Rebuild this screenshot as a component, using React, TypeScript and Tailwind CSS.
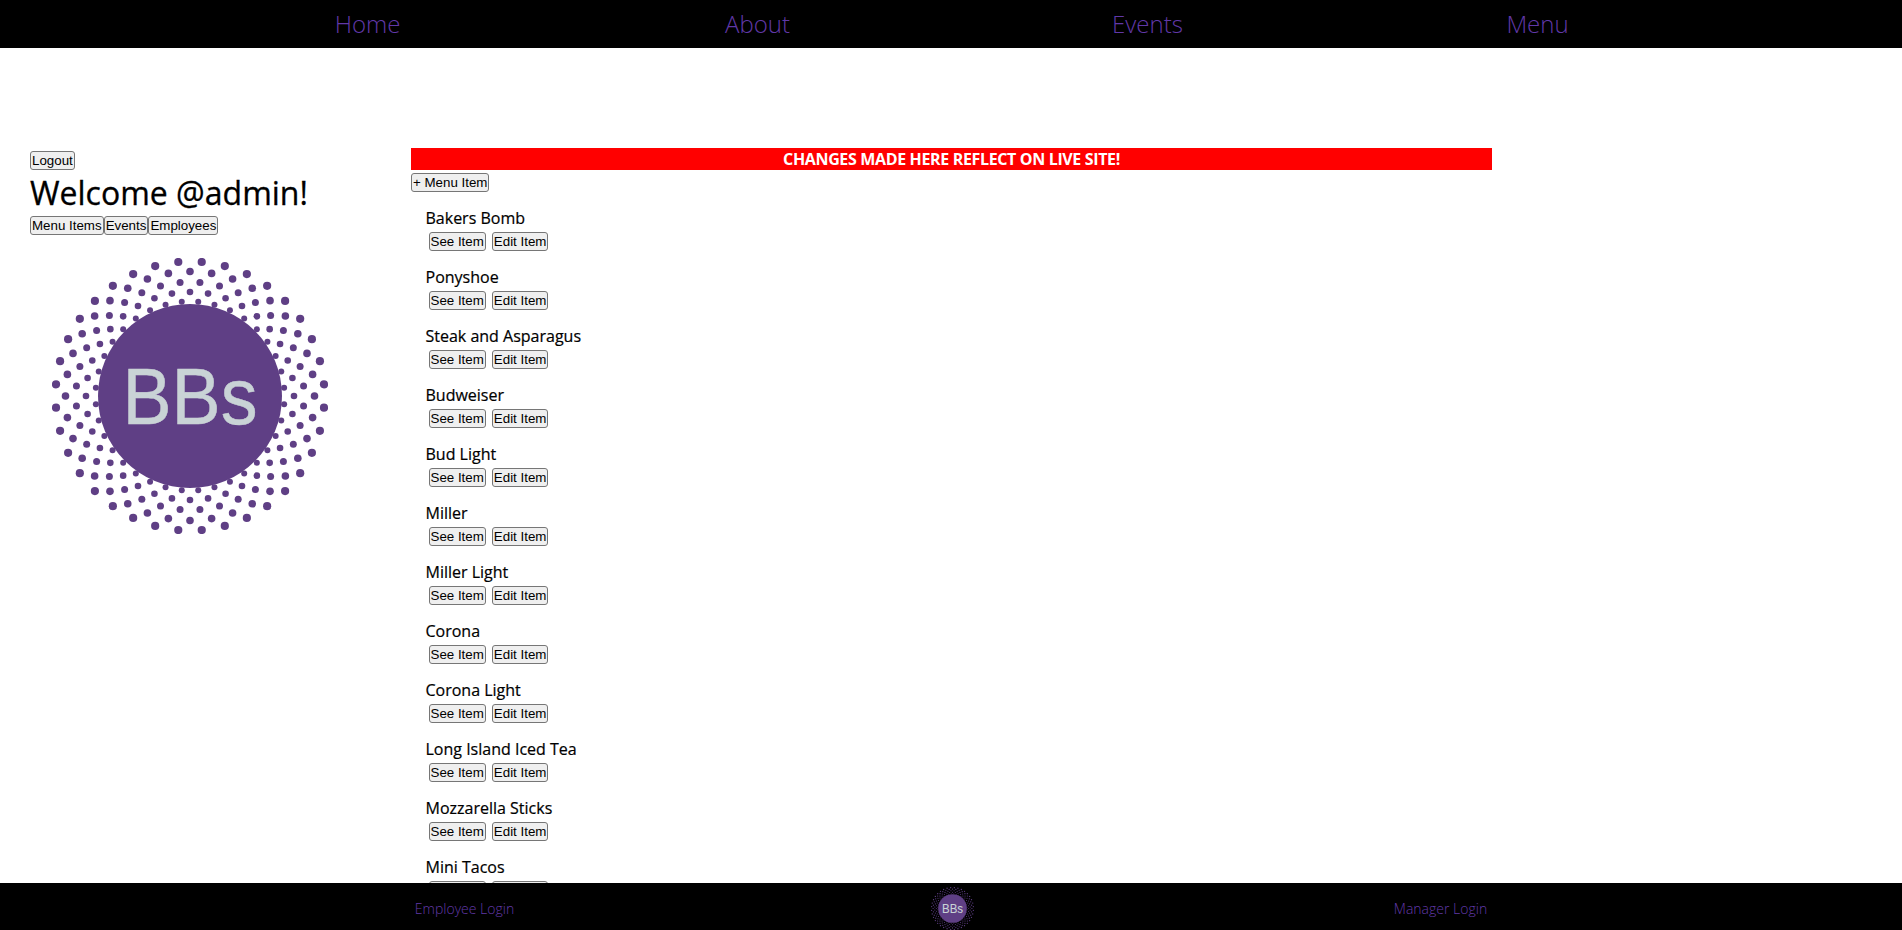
import React from 'react';

const navLinks = ['Home', 'About', 'Events', 'Menu'];

const menuItems = [
  'Bakers Bomb',
  'Ponyshoe',
  'Steak and Asparagus',
  'Budweiser',
  'Bud Light',
  'Miller',
  'Miller Light',
  'Corona',
  'Corona Light',
  'Long Island Iced Tea',
  'Mozzarella Sticks',
  'Mini Tacos',
];

// rings of the halftone logo: radius, dot radius, angle offset in degrees
const rings = [
  { r: 134.5, dot: 4.1, offset: 5 },
  { r: 124.5, dot: 3.8, offset: 0 },
  { r: 114, dot: 3.5, offset: 5 },
  { r: 104, dot: 3.3, offset: 0 },
  { r: 94.5, dot: 3, offset: 5 },
];

const Logo: React.FC<{ className?: string }> = ({ className }) => (
  <svg viewBox="-138 -138 276 276" className={className}>
    {rings.map((ring) =>
      Array.from({ length: 36 }, (_, i) => {
        const a = ((i * 10 + ring.offset) * Math.PI) / 180;
        return (
          <circle
            key={`${ring.r}-${i}`}
            cx={ring.r * Math.sin(a)}
            cy={-ring.r * Math.cos(a)}
            r={ring.dot}
            fill="#5f3f85"
          />
        );
      }),
    )}
    <circle cx="0" cy="0" r="92" fill="#5f3f85" />
    <text
      x="0"
      y="28"
      textAnchor="middle"
      textLength="135"
      lengthAdjust="spacingAndGlyphs"
      fontSize="80"
      fill="#c9d3d6"
      stroke="#c9d3d6"
      strokeWidth="0.5"
      strokeLinejoin="round"
      style={{ fontFamily: '"Liberation Sans", sans-serif' }}
    >
      BBs
    </text>
  </svg>
);

const Btn: React.FC<{ children: React.ReactNode }> = ({ children }) => (
  <button className="h-[19px] shrink-0 rounded-[3px] border border-[#767676] bg-[#efefef] px-[1px] font-['Liberation_Sans',sans-serif] text-[13.33px] leading-none text-black">
    {children}
  </button>
);

export default function App() {
  return (
    <div className="flex h-[930px] flex-col overflow-hidden bg-white font-['Open_Sans',sans-serif] text-black">
      <header className="flex h-[48px] shrink-0 justify-center bg-black">
        <nav className="ml-[3px] grid w-[1560px] grid-cols-4">
          {navLinks.map((link) => (
            <a key={link} className="flex items-center justify-center text-[24px] font-light text-[#6038a8]">
              {link}
            </a>
          ))}
        </nav>
      </header>

      <main className="flex min-h-0 flex-1 overflow-hidden pl-[30px] pt-[100px]">
        <aside className="flex w-[381px] shrink-0 flex-col items-start pt-[3px]">
          <Btn>Logout</Btn>
          <h1 className="text-[32px] font-normal leading-[46px] [-webkit-text-stroke:0.3px_black]">Welcome @admin!</h1>
          <div className="flex">
            <Btn>Menu Items</Btn>
            <Btn>Events</Btn>
            <Btn>Employees</Btn>
          </div>
          <Logo className="ml-[22px] mt-[23px] h-[276px] w-[276px]" />
        </aside>

        <section className="w-[1081px] shrink-0">
          <div className="h-[22px] bg-[#ff0000] text-center text-[16px] font-bold leading-[22px] tracking-[-0.35px] text-white">
            CHANGES MADE HERE REFLECT ON LIVE SITE!
          </div>
          <div className="mt-[3px] flex">
            <Btn>+ Menu Item</Btn>
          </div>
          <ul className="pl-[14.5px]">
            {menuItems.map((item) => (
              <li key={item} className="pt-[15px]">
                <p className="text-[16px] font-normal leading-[22px] [-webkit-text-stroke:0.2px_black]">{item}</p>
                <div className="ml-[3px] mt-[3px] flex gap-[6px]">
                  <Btn>See Item</Btn>
                  <Btn>Edit Item</Btn>
                </div>
              </li>
            ))}
          </ul>
        </section>
      </main>

      <footer className="flex h-[47px] shrink-0 justify-center bg-black pt-[3px]">
        <div className="ml-[3px] grid w-[1464px] grid-cols-3 items-center text-center text-[14px] font-light text-[#6038a8]">
          <a>Employee Login</a>
          <div className="flex justify-center">
            <Logo className="h-[43px] w-[43px]" />
          </div>
          <a>Manager Login</a>
        </div>
      </footer>
    </div>
  );
}
